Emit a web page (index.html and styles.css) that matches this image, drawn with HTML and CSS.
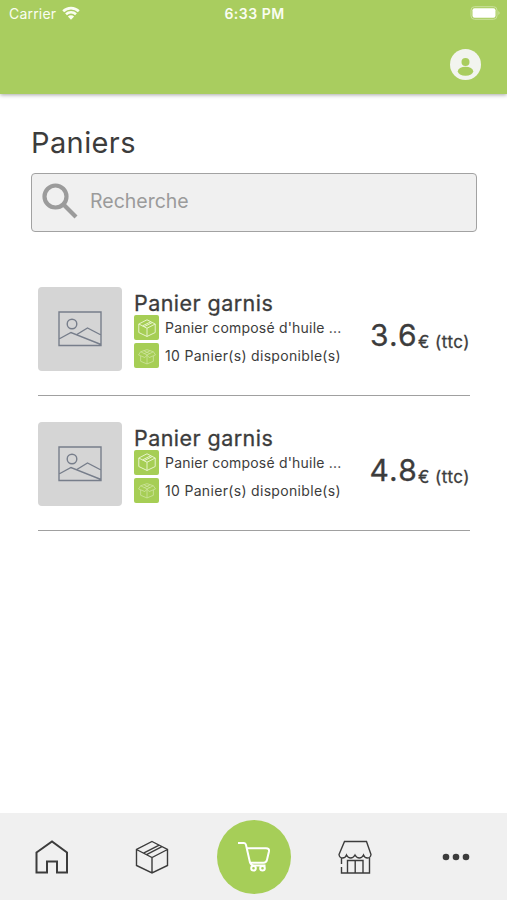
FILE: index.html
```
<!DOCTYPE html>
<html lang="fr">
  <head>
    <meta charset="UTF-8" />
    <meta name="viewport" content="width=device-width, initial-scale=1.0" />
    <title>Paniers</title>
    <link rel="stylesheet" href="styles.css">
  </head>
  <body>
    <svg class="sprite" width="0" height="0">
      <symbol id="box" viewBox="0 0 34 34">
        <path d="M17 1.500 32.500 9.500v16L17 33 1.500 25.500v-16ZM1.500 9.500 17 17.500 32.500 9.500M17 17.500V33M8.500 13.100 24.200 5.200M11.500 14.600 27 6.700" />
      </symbol>
      <symbol id="open-box" viewBox="0 0 34 34">
        <path d="M5 17v10l12 5 12-5V17M17 17v15M5 9l12-4 12 4-12 6ZM5 9l-4 6 12 5 4-5 4 5 12-5-4-6M11 7l12 6M23 7l-12 6" />
      </symbol>
      <symbol id="picture" viewBox="0 0 44 36">
        <path d="M1 1h42v33.500H1ZM1 28l12-6.500 30 12M18 24l11.500-7L43 24" />
        <circle cx="14" cy="13" r="4.800" />
      </symbol>
    </svg>

    <header class="header">
      <div class="status-bar">
        <div class="carrier">
          <span>Carrier</span>
          <svg class="wifi" viewBox="0 0 18 14">
            <path d="M1.200 5.300a11.200 11.200 0 0 1 15.600 0M4 8.200a7.200 7.200 0 0 1 10 0" />
            <path class="wifi-dot" d="M9 13.700 5.900 10.600a4.400 4.400 0 0 1 6.200 0Z" />
          </svg>
        </div>
        <div class="time">6:33 PM</div>
        <svg class="battery" viewBox="0 0 31 14">
          <rect class="battery-shell" x="1" y=".7" width="26" height="12.600" rx="3.500" />
          <rect x="2.500" y="2.200" width="23" height="9.600" rx="2" />
          <path class="battery-tip" d="M28.500 5v4q2-2 0-4" />
        </svg>
      </div>
      <svg class="avatar" viewBox="0 0 31 31">
        <circle class="avatar-disc" cx="15.500" cy="15.500" r="15.500" />
        <circle cx="15.500" cy="13" r="4" />
        <ellipse cx="15.500" cy="22.300" rx="7.700" ry="4.500" />
      </svg>
    </header>

    <main class="content">
      <h1>Paniers</h1>
      <div class="search">
        <svg class="search-icon" viewBox="0 0 36 36">
          <circle cx="13.500" cy="13.500" r="11" />
          <path d="m22 22 12 12" />
        </svg>
        <span>Recherche</span>
      </div>

      <div class="list">
        <div class="item">
          <div class="thumb"><svg><use href="#picture" /></svg></div>
          <div class="details">
            <h2>Panier garnis</h2>
            <div class="meta">
              <span class="tag"><svg><use href="#box" /></svg></span>
              <span class="description">Panier composé d'huile ...</span>
            </div>
            <div class="meta">
              <span class="tag tag-light"><svg><use href="#open-box" /></svg></span>
              <span>10 Panier(s) disponible(s)</span>
            </div>
          </div>
          <div class="price"><span class="amount">3.6</span><span class="unit">€ (ttc)</span></div>
        </div>

        <div class="item">
          <div class="thumb"><svg><use href="#picture" /></svg></div>
          <div class="details">
            <h2>Panier garnis</h2>
            <div class="meta">
              <span class="tag"><svg><use href="#box" /></svg></span>
              <span class="description">Panier composé d'huile ...</span>
            </div>
            <div class="meta">
              <span class="tag tag-light"><svg><use href="#open-box" /></svg></span>
              <span>10 Panier(s) disponible(s)</span>
            </div>
          </div>
          <div class="price"><span class="amount">4.8</span><span class="unit">€ (ttc)</span></div>
        </div>
      </div>
    </main>

    <nav class="tabs">
      <a class="tab">
        <svg class="icon-home" viewBox="0 0 34 34">
          <path d="M1.500 12.500 17 1.500l15 11v20H22V21.500H12v11H1.500Z" />
        </svg>
      </a>
      <a class="tab">
        <svg class="icon-box"><use href="#box" /></svg>
      </a>
      <a class="tab tab-cart">
        <svg class="icon-cart" viewBox="0 0 34 32">
          <path d="M1 2h6q1.500 0 2 2l4 17.500q1 3 4 3h11.500M10.500 7.200h18.500q3.500 0 3 3l-2 8.500q-.7 3-3.500 3H13.500" />
          <circle cx="16.500" cy="27.300" r="2.300" />
          <circle cx="25.500" cy="27.300" r="2.300" />
        </svg>
      </a>
      <a class="tab">
        <svg class="icon-shop" viewBox="0 0 34 34">
          <path d="M6.500 1.500h22L33 14.500q-.5 3.500-3.500 3.500-3 0-4-3-1.500 3-4.200 3-2.600 0-4.300-3-1.700 3-4.300 3-2.700 0-4.200-3-1 3-4 3Q1.500 18 1 14.500Z" />
          <path d="M3.500 18v6M3.500 27v6h28V18M9.500 33V20.500h15.500V33M17.200 20.500V33" />
        </svg>
      </a>
      <a class="tab">
        <svg class="icon-more" viewBox="0 0 28 8">
          <circle cx="4" cy="4" r="3.300" />
          <circle cx="14" cy="4" r="3.300" />
          <circle cx="24" cy="4" r="3.300" />
        </svg>
      </a>
    </nav>
  </body>
</html>
```
FILE: styles.css
```
* {
  padding: 0;
  margin: 0;
  box-sizing: border-box;
}

body {
  display: flex;
  flex-direction: column;
  height: 900px;
  font-family: Inter, sans-serif;
  color: #3c3c3c;
  background-color: #fff;
}

svg {
  display: block;
  fill: none;
  stroke: currentColor;
}

.sprite {
  position: absolute;
}

/* header */
.header {
  height: 94px;
  background-color: #a9cd5f;
  box-shadow: 0 1px 4px rgba(0, 0, 0, 0.35);
}

.status-bar {
  display: grid;
  grid-template-columns: 1fr auto 1fr;
  align-items: center;
  height: 27px;
  padding: 0 7px 0 9px;
  color: #fafdf2;
  font-size: 14px;
}

.carrier {
  display: flex;
  align-items: center;
  gap: 6px;
  letter-spacing: 0.2px;
}

.wifi {
  width: 18px;
  height: 14px;
  margin-top: -2px;
  stroke-width: 2.6;
}

.wifi-dot {
  fill: currentColor;
  stroke: none;
}

.time {
  font-weight: 600;
  letter-spacing: 0.5px;
}

.battery {
  width: 31px;
  height: 14px;
  margin-top: -1px;
  margin-right: -1px;
  justify-self: end;
  fill: #fff;
  stroke: none;
}

.battery-shell {
  fill: none;
  stroke: #cbe19d;
}

.battery-tip {
  fill: #d5e8b0;
}

.avatar {
  width: 31px;
  height: 31px;
  margin: 22px 26px 0 auto;
  fill: #a9cd5f;
  stroke: none;
}

.avatar-disc {
  fill: #f2f4ef;
}

/* content */
.content {
  flex: 1;
  padding: 31px 30px 0 31px;
}

h1 {
  height: 36px;
  line-height: 36px;
  font-size: 29px;
  font-weight: 400;
  letter-spacing: 0.4px;
}

.search {
  display: flex;
  align-items: center;
  gap: 12px;
  height: 59px;
  margin-top: 12px;
  padding: 0 10px 3px;
  border: 1px solid #a2a2a2;
  border-radius: 4px;
  background-color: #f0f0f0;
  color: #9b9b9b;
  font-size: 19.5px;
}

.search-icon {
  width: 36px;
  height: 36px;
  stroke-width: 4.2;
}

.list {
  padding: 55px 7px 0;
}

.item {
  display: flex;
  height: 109px;
  margin-bottom: 25.5px;
  border-bottom: 1px solid #a0a0a0;
}

.thumb {
  display: flex;
  align-items: center;
  justify-content: center;
  width: 84px;
  height: 84px;
  border-radius: 4px;
  background-color: #d5d5d5;
  color: #777e8b;
}

.thumb svg {
  width: 44px;
  height: 36px;
  stroke-width: 1.4;
}

.details {
  flex: 1;
  padding: 3px 0 0 12px;
}

h2 {
  height: 25px;
  line-height: 26px;
  font-size: 21.5px;
  font-weight: 400;
  letter-spacing: 0.45px;
  white-space: nowrap;
  -webkit-text-stroke: 0.3px;
}

.meta {
  display: flex;
  align-items: center;
  gap: 6px;
  height: 25px;
  margin-bottom: 3px;
  font-size: 14px;
  letter-spacing: 0.32px;
  white-space: nowrap;
}

.description {
  letter-spacing: 0.2px;
}

.tag {
  display: flex;
  align-items: center;
  justify-content: center;
  width: 25px;
  height: 25px;
  border-radius: 2px;
  background-color: #a6ce55;
  color: #eaf5d1;
}

.tag svg {
  width: 18px;
  height: 18px;
  stroke-width: 1.8;
}

.tag-light {
  color: #cfe5a0;
}

.tag-light svg {
  stroke-width: 1.5;
}

.price {
  display: flex;
  align-items: baseline;
  padding-top: 30px;
  font-size: 17px;
  white-space: nowrap;
  -webkit-text-stroke: 0.3px;
}

.amount {
  line-height: 36px;
  font-size: 30px;
  letter-spacing: 1.2px;
}

.unit {
  margin-bottom: -2px;
  letter-spacing: 0.5px;
  transform: translateY(1.5px);
}

/* bottom tabs */
.tabs {
  display: grid;
  grid-template-columns: repeat(5, 1fr);
  place-items: center;
  height: 87px;
  background-color: #f0f0f0;
  color: #3c3c3c;
}

.tab-cart {
  display: flex;
  align-items: center;
  justify-content: center;
  width: 74px;
  height: 74px;
  margin-left: 1px;
  border-radius: 50%;
  background-color: #a6ce58;
  color: #fff;
}

.icon-home,
.icon-box,
.icon-shop {
  width: 34px;
  height: 34px;
  stroke-width: 1.4;
}

.icon-home {
  margin-left: 2px;
  stroke-width: 2;
}

.icon-cart {
  width: 34px;
  height: 32px;
  stroke-width: 2;
}

.icon-more {
  width: 28px;
  height: 8px;
  fill: currentColor;
  stroke: none;
}
```
